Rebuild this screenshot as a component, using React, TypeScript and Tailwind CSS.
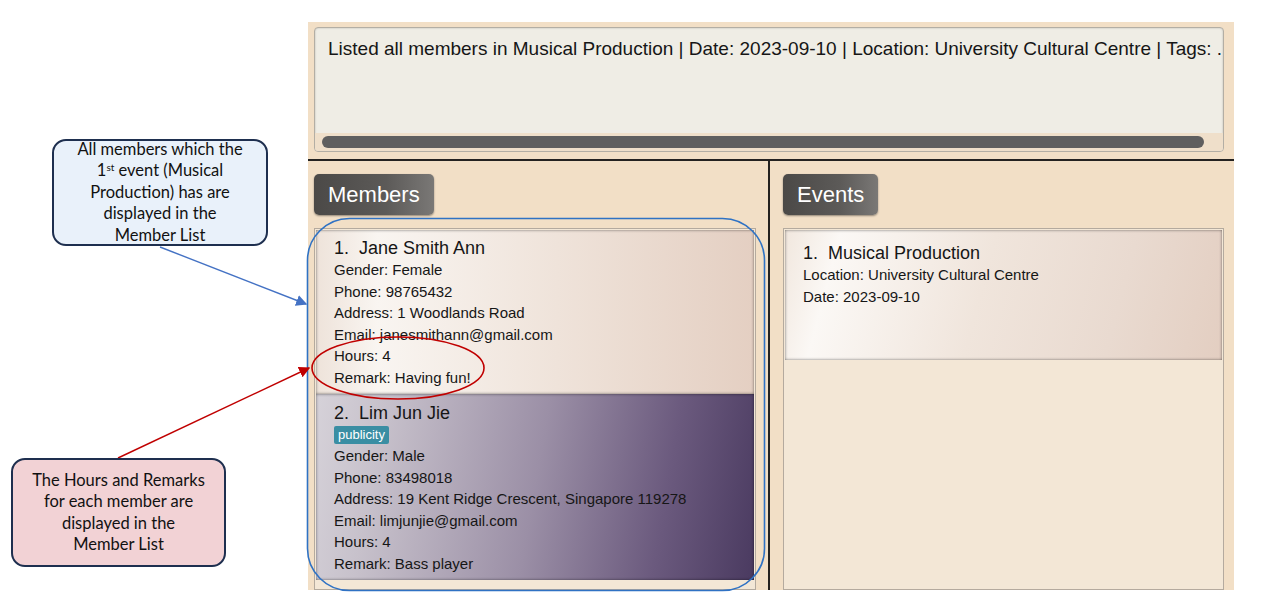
import React from "react";

const memberCardA =
  "bg-[linear-gradient(to_right,#eee3da,#f9f5f1_14%,#efe3da_55%,#e4cfc2)]";
const eventCard =
  "bg-[linear-gradient(105deg,#f1e7de,#fbf8f5_12%,#f0e5dc_45%,#e9dad0_75%,#e3cec1)]";
const memberCardB =
  "bg-[linear-gradient(100deg,#d6d2d9,#c7c1cb_15%,#9b8fa6_50%,#6b5a7e_78%,#4a3a60)]";

function Line({ children }: { children: React.ReactNode }) {
  return <div className="text-[15px] leading-[21.5px] whitespace-nowrap">{children}</div>;
}

function Header({ label }: { label: string }) {
  return (
    <div className="self-start h-[41px] px-[14px] flex items-center rounded-[5px] bg-[linear-gradient(to_right,#4b4947,#5c5a58_60%,#7a7876)] text-white text-[22px] shadow-[0_1px_2px_rgba(0,0,0,0.4)]">
      {label}
    </div>
  );
}

export default function App() {
  return (
    <div className="relative w-[1266px] h-[609px] bg-white overflow-hidden font-['Liberation_Sans',sans-serif] text-[#161616]">
      <div className="pt-[22px] pl-[308px]">
        <div className="w-[926px] h-[568px] bg-[#f2dfc6] flex flex-col">
          {/* result display */}
          <div className="h-[137px] pt-[5px] pl-[6px] pr-[10px]">
            <div className="h-[125px] rounded-[4px] border border-[#b3aea4] bg-[#efede5] shadow-[inset_0_0_2px_rgba(0,0,0,0.25)] flex flex-col overflow-hidden">
              <div className="flex-1 pt-[9px] px-[13px] text-[19px] leading-[24px] whitespace-nowrap overflow-hidden">
                Listed all members in Musical Production | Date: 2023-09-10 | Location: University Cultural Centre | Tags: .
              </div>
              <div className="h-[18px] bg-[#efdfca] flex items-center pl-[7px] pr-[19px]">
                <div className="h-[12px] flex-1 rounded-full bg-[#5f5f5f]" />
              </div>
            </div>
          </div>
          <div className="h-[2px] bg-[#242220]" />

          <div className="flex flex-1 min-h-0">
            {/* members */}
            <div className="w-[460px] pl-[6px] pr-[12px] pt-[13px] flex flex-col">
              <Header label="Members" />
              <div className="mt-[13px] flex-1 min-h-0 overflow-hidden border border-[#b4aa9e] bg-[#f3e7d6] p-[1px]">
                <div className={`${memberCardA} shadow-[inset_0_0_3px_rgba(0,0,0,0.55)] pt-[7px] pb-[6px] px-[18px]`}>
                  <div className="text-[18px] leading-[22px]">1.&nbsp;&nbsp;Jane Smith Ann</div>
                  <Line>Gender: Female</Line>
                  <Line>Phone: 98765432</Line>
                  <Line>Address: 1 Woodlands Road</Line>
                  <Line>Email: janesmithann@gmail.com</Line>
                  <Line>Hours: 4</Line>
                  <Line>Remark: Having fun!</Line>
                </div>
                <div className={`${memberCardB} shadow-[inset_0_0_3px_rgba(0,0,0,0.55)] pt-[8px] pb-[6px] px-[18px]`}>
                  <div className="text-[18px] leading-[22px]">2.&nbsp;&nbsp;Lim Jun Jie</div>
                  <div className="mt-[2px] mb-[1px] flex">
                    <span className="h-[18px] px-[4px] rounded-[2px] bg-[#3a8ea3] text-white text-[13px] leading-[18px]">
                      publicity
                    </span>
                  </div>
                  <Line>Gender: Male</Line>
                  <Line>Phone: 83498018</Line>
                  <Line>Address: 19 Kent Ridge Crescent, Singapore 119278</Line>
                  <Line>Email: limjunjie@gmail.com</Line>
                  <Line>Hours: 4</Line>
                  <Line>Remark: Bass player</Line>
                </div>
              </div>
            </div>
            <div className="w-[2px] bg-[#242220]" />

            {/* events */}
            <div className="flex-1 pl-[13px] pr-[10px] pt-[13px] flex flex-col">
              <Header label="Events" />
              <div className="mt-[13px] flex-1 min-h-0 overflow-hidden border border-[#b4aa9e] bg-[#f3e7d6] p-[1px]">
                <div className={`${eventCard} h-[130px] shadow-[inset_0_0_3px_rgba(0,0,0,0.55)] pt-[12px] px-[18px]`}>
                  <div className="text-[18px] leading-[22px]">1.&nbsp;&nbsp;Musical Production</div>
                  <div className="text-[15px] leading-[22px]">Location: University Cultural Centre</div>
                  <div className="text-[15px] leading-[22px]">Date: 2023-09-10</div>
                </div>
              </div>
            </div>
          </div>
        </div>
      </div>

      {/* annotations */}
      <svg className="absolute inset-0 pointer-events-none" width="1266" height="609" viewBox="0 0 1266 609">
        <defs>
          <marker id="ab" markerWidth="8" markerHeight="8" refX="7" refY="4" orient="auto">
            <path d="M0,0 L8,4 L0,8 Z" fill="#4472c4" />
          </marker>
          <marker id="ar" markerWidth="8" markerHeight="8" refX="7" refY="4" orient="auto">
            <path d="M0,0 L8,4 L0,8 Z" fill="#c00000" />
          </marker>
        </defs>
        <rect x="307.5" y="218.5" width="457" height="372" rx="42" fill="none" stroke="#2f72c4" strokeWidth="1.6" />
        <ellipse cx="398" cy="368" rx="86" ry="31" fill="none" stroke="#c00000" strokeWidth="1.6" />
        <line x1="160" y1="247" x2="306" y2="304" stroke="#4472c4" strokeWidth="1.4" markerEnd="url(#ab)" />
        <line x1="118" y1="458" x2="309" y2="368" stroke="#c00000" strokeWidth="1.4" markerEnd="url(#ar)" />
      </svg>

      <div className="absolute left-[52px] top-[139px] w-[216px] h-[107px] rounded-[14px] border-2 border-[#1e2f4f] bg-[#e9f1fa] flex flex-col items-center justify-center font-['Lato',sans-serif] text-[16.5px] leading-[21.5px] text-[#111]">
        <div>All members which the</div>
        <div>
          1<sup className="text-[10px]">st</sup> event (Musical
        </div>
        <div>Production) has are</div>
        <div>displayed in the</div>
        <div>Member List</div>
      </div>

      <div className="absolute left-[11px] top-[458px] w-[215px] h-[109px] rounded-[14px] border-2 border-[#1e2f4f] bg-[#f2d2d5] flex flex-col items-center justify-center font-['Lato',sans-serif] text-[16.5px] leading-[21.5px] text-[#111]">
        <div>The Hours and Remarks</div>
        <div>for each member are</div>
        <div>displayed in the</div>
        <div>Member List</div>
      </div>
    </div>
  );
}
